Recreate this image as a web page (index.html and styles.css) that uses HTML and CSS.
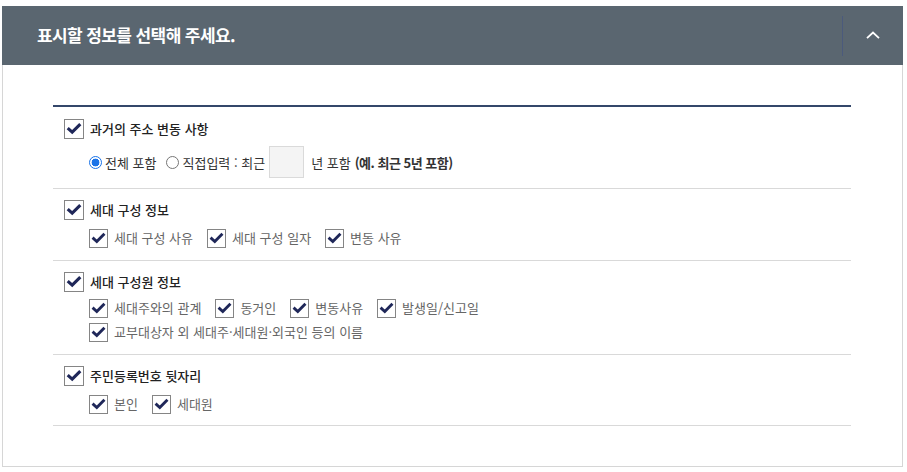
FILE: index.html
```html
<!DOCTYPE html>
<html lang="ko">
<head>
<meta charset="utf-8">
<link rel="stylesheet" href="styles.css">
</head>
<body>
<div class="panel">
  <div class="panel-head">
    <h2 class="panel-title">표시할 정보를 선택해 주세요.</h2>
    <button class="toggle" type="button" aria-label="접기">
      <svg width="14" height="8" viewBox="0 0 14 8"><path d="M1 7.2 L7 1.5 L13 7.2" fill="none" stroke="#fff" stroke-width="1.8"/></svg>
    </button>
  </div>
  <div class="panel-body">
    <div class="opt-list">
      <div class="opt-group g1">
        <label class="chk main"><span class="box"><svg viewBox="0 0 20 20"><path d="M3 9 L8 13.5 L17 4.5" fill="none" stroke="#1f2759" stroke-width="3.4"/></svg></span><span class="lbl">과거의 주소 변동 사항</span></label>
        <div class="sub sub-radio">
          <label class="rad on"><span class="dot"></span>전체 포함</label>
          <label class="rad"><span class="dot"></span>직접입력 : 최근</label>
          <span class="year-input"></span>
          <span class="after">년 포함</span>
          <span class="ex">(예. 최근 5년 포함)</span>
        </div>
      </div>
      <div class="opt-group g2">
        <label class="chk main"><span class="box"><svg viewBox="0 0 20 20"><path d="M3 9 L8 13.5 L17 4.5" fill="none" stroke="#1f2759" stroke-width="3.4"/></svg></span><span class="lbl">세대 구성 정보</span></label>
        <div class="sub">
          <label class="chk"><span class="box"><svg viewBox="0 0 20 20"><path d="M3 9 L8 13.5 L17 4.5" fill="none" stroke="#1f2759" stroke-width="3.4"/></svg></span><span class="lbl">세대 구성 사유</span></label>
          <label class="chk"><span class="box"><svg viewBox="0 0 20 20"><path d="M3 9 L8 13.5 L17 4.5" fill="none" stroke="#1f2759" stroke-width="3.4"/></svg></span><span class="lbl">세대 구성 일자</span></label>
          <label class="chk"><span class="box"><svg viewBox="0 0 20 20"><path d="M3 9 L8 13.5 L17 4.5" fill="none" stroke="#1f2759" stroke-width="3.4"/></svg></span><span class="lbl">변동 사유</span></label>
        </div>
      </div>
      <div class="opt-group g3">
        <label class="chk main"><span class="box"><svg viewBox="0 0 20 20"><path d="M3 9 L8 13.5 L17 4.5" fill="none" stroke="#1f2759" stroke-width="3.4"/></svg></span><span class="lbl">세대 구성원 정보</span></label>
        <div class="sub">
          <label class="chk"><span class="box"><svg viewBox="0 0 20 20"><path d="M3 9 L8 13.5 L17 4.5" fill="none" stroke="#1f2759" stroke-width="3.4"/></svg></span><span class="lbl">세대주와의 관계</span></label>
          <label class="chk"><span class="box"><svg viewBox="0 0 20 20"><path d="M3 9 L8 13.5 L17 4.5" fill="none" stroke="#1f2759" stroke-width="3.4"/></svg></span><span class="lbl">동거인</span></label>
          <label class="chk"><span class="box"><svg viewBox="0 0 20 20"><path d="M3 9 L8 13.5 L17 4.5" fill="none" stroke="#1f2759" stroke-width="3.4"/></svg></span><span class="lbl">변동사유</span></label>
          <label class="chk"><span class="box"><svg viewBox="0 0 20 20"><path d="M3 9 L8 13.5 L17 4.5" fill="none" stroke="#1f2759" stroke-width="3.4"/></svg></span><span class="lbl">발생일/신고일</span></label>
        </div>
        <div class="sub sub-next">
          <label class="chk"><span class="box"><svg viewBox="0 0 20 20"><path d="M3 9 L8 13.5 L17 4.5" fill="none" stroke="#1f2759" stroke-width="3.4"/></svg></span><span class="lbl">교부대상자 외 세대주·세대원·외국인 등의 이름</span></label>
        </div>
      </div>
      <div class="opt-group g4">
        <label class="chk main"><span class="box"><svg viewBox="0 0 20 20"><path d="M3 9 L8 13.5 L17 4.5" fill="none" stroke="#1f2759" stroke-width="3.4"/></svg></span><span class="lbl">주민등록번호 뒷자리</span></label>
        <div class="sub">
          <label class="chk"><span class="box"><svg viewBox="0 0 20 20"><path d="M3 9 L8 13.5 L17 4.5" fill="none" stroke="#1f2759" stroke-width="3.4"/></svg></span><span class="lbl">본인</span></label>
          <label class="chk"><span class="box"><svg viewBox="0 0 20 20"><path d="M3 9 L8 13.5 L17 4.5" fill="none" stroke="#1f2759" stroke-width="3.4"/></svg></span><span class="lbl">세대원</span></label>
        </div>
      </div>
    </div>
  </div>
</div>
</body>
</html>
```
FILE: styles.css
```css
* { box-sizing: border-box; }
html, body { margin: 0; padding: 0; background: #fff; }
body {
  font-family: "Noto Sans CJK KR", "Noto Sans", sans-serif;
  color: #333;
  font-size: 13px;
}
.panel {
  margin: 6px 0 0 2px;
  width: 901px;
  height: 461px;
  border: 1px solid #d6d6d6;
  border-top: none;
}
.panel-head {
  margin: 0 -1px;
  height: 59px;
  background: #5a6670;
  display: flex;
  align-items: center;
  justify-content: space-between;
}
.panel-title {
  margin: 0 0 0 35px;
  color: #fff;
  font-size: 17px;
  font-weight: 700;
  letter-spacing: -0.6px;
  line-height: 20px;
  padding-bottom: 2px;
}
.toggle {
  width: 60px;
  height: 40px;
  border: none;
  border-left: 1px solid #4b5a7c;
  background: transparent;
  padding: 0;
  display: flex;
  align-items: center;
  justify-content: center;
  margin-right: 1px;
}
.toggle svg { display: block; margin-top: -2px; }
.panel-body {
  padding: 40px 51px 0 50px;
}
.opt-list {
  border-top: 2px solid #34476a;
}
.opt-group {
  border-bottom: 1px solid #d9d9d9;
  padding: 11px 0 12px 11px;
}
.g1 { padding-bottom: 10px; padding-top: 12px; }
.g4 { padding-bottom: 11px; }
.chk {
  display: inline-flex;
  align-items: center;
  height: 20px;
  line-height: 20px;
}
.chk.main { display: flex; }
.box {
  width: 19px;
  height: 19px;
  border: 1px solid #858585;
  background: #fff;
  display: block;
  flex: none;
}
.box svg { display: block; width: 17px; height: 17px; }
.main .box { width: 20px; height: 20px; }
.main .box svg { width: 18px; height: 18px; }
.chk .lbl {
  margin-left: 6px;
  line-height: 20px;
  color: #666;
  letter-spacing: 0;
}
.main .lbl { color: #222; font-weight: 500; }
.sub {
  display: flex;
  align-items: center;
  gap: 14px;
  padding-left: 25px;
  margin-top: 8px;
  height: 20px;
}
.g3 .sub { margin-top: 6px; }
.g3 .sub-next { margin-top: 4px; }
.sub-radio {
  margin-top: 7px;
  gap: 0;
  height: 32px;
  color: #333;
}
.rad {
  display: inline-flex;
  align-items: center;
  margin-right: 10px;
  color: #333;
}
.rad .dot {
  width: 13px;
  height: 13px;
  border-radius: 50%;
  border: 1px solid #767676;
  background: #fff;
  margin-right: 3px;
  flex: none;
}
.rad.on .dot {
  border: 1px solid #1a73e8;
  background: radial-gradient(circle, #1a73e8 0 3.6px, #fff 4.2px);
}
.year-input {
  width: 35px;
  height: 32px;
  background: #f4f4f4;
  border: 1px solid #dadada;
  margin-left: -6px;
  margin-right: 7px;
}
.after { margin-right: 4px; color: #333; }
.ex { font-weight: 700; color: #333; letter-spacing: -0.5px; }
```
